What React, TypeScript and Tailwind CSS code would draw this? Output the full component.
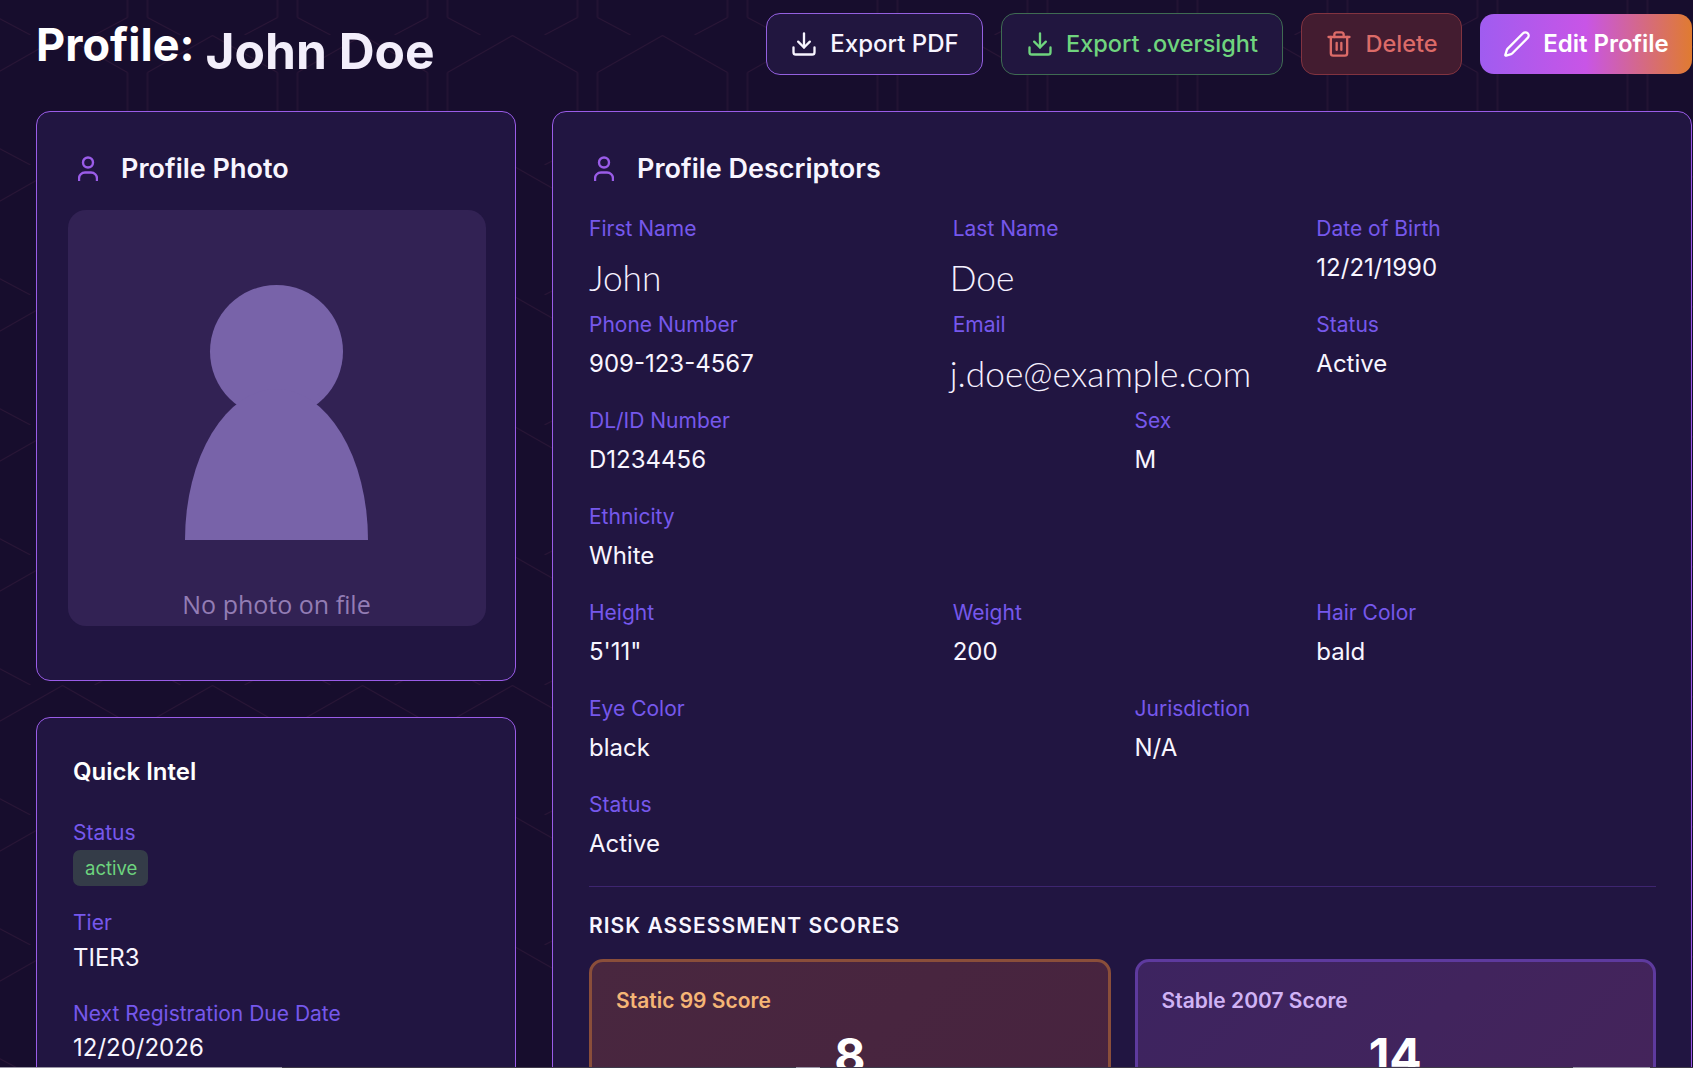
import { Download, Pen, Trash2 } from 'lucide-react';

const inter = '[font-family:Inter,sans-serif]';

function HexBackground() {
  return (
    <svg className="absolute inset-0 h-full w-full" aria-hidden="true">
      <defs>
        <pattern id="hex" x="-12.5" y="-95" width="150" height="130" patternUnits="userSpaceOnUse">
          <path d="M75 0.5 L10 37.5 V112.5 L43 130 M75 0.5 L140 37.5 V112.5 L107 130" fill="none" stroke="#2d1738" strokeWidth="1" />
        </pattern>
      </defs>
      <rect width="100%" height="100%" fill="url(#hex)" />
    </svg>
  );
}

function PersonIcon() {
  return (
    <svg viewBox="0 0 20 26" className="h-[26px] w-[20px] shrink-0" fill="none" stroke="#9a5ce8" strokeWidth="2.4" aria-hidden="true">
      <circle cx="10" cy="6.5" r="5" />
      <path d="M1 25v-2.5a6 6 0 0 1 6-6h6a6 6 0 0 1 6 6V25" />
    </svg>
  );
}

function Field({ label, value, big, shift }: { label: string; value: string; big?: boolean; shift?: boolean }) {
  return (
    <div>
      <div className="text-[21px] leading-[30px] text-[#7658ec]">{label}</div>
      {big ? (
        <div className={`mt-[18px] h-[22px] text-[35.3px] leading-[32px] font-light whitespace-nowrap text-[#f5f0ff] [font-family:Lato,sans-serif] ${shift ? '-ml-[3px]' : ''}`}>{value}</div>
      ) : (
        <div className="mt-[8px] text-[24px] leading-[32px] text-[#f8f5ff]">{value}</div>
      )}
    </div>
  );
}

function ScoreCard({ label, value, className, labelClass }: { label: string; value: string; className: string; labelClass: string }) {
  return (
    <div className={`h-[200px] rounded-[14px] border-[3px] px-[24px] pt-[24px] ${className}`}>
      <div className={`text-[21px] leading-[30px] font-semibold ${labelClass}`}>{label}</div>
      <div className="mt-[12px] text-center text-[48px] leading-[56px] font-bold text-white">{value}</div>
    </div>
  );
}

export default function App() {
  return (
    <div className={`relative h-[1068px] w-[1693px] overflow-hidden bg-[#170d2d] ${inter}`}>
      <HexBackground />
      <div className="relative w-[1692px] pl-[36px] pt-[13px]">
        {/* 상단 */}
        <div className="flex h-[62px] items-start justify-between">
          <h1 className="flex items-baseline gap-[11px] font-bold text-white">
            <span className="text-[45px] leading-[60px]">Profile:</span>
            <span className="relative top-[8px] text-[49.7px] leading-[60px] font-bold text-[#f3eefb]">John Doe</span>
          </h1>
          <div className="flex gap-[18px]">
            <button className="flex h-[62px] w-[217px] items-center justify-center gap-[12px] rounded-[14px] border border-[#9460e0] bg-[#21163f] text-[24px] font-medium text-[#f8f5ff]">
              <Download size={28} />
              Export PDF
            </button>
            <button className="flex h-[62px] w-[282px] items-center justify-center gap-[12px] rounded-[14px] border border-[#3f6b52] bg-[#21163f] text-[23.5px] font-medium text-[#6fd47e]">
              <Download size={28} />
              Export .oversight
            </button>
            <button className="flex h-[62px] w-[161px] items-center justify-center gap-[12px] rounded-[14px] border border-[#823340] bg-[#431c30] text-[23.5px] font-medium text-[#dc6b68]">
              <Trash2 size={28} />
              Delete
            </button>
            <button className="mt-px flex h-[60px] w-[212px] items-center justify-center gap-[12px] rounded-[14px] bg-[linear-gradient(90deg,#a05cf0_0%,#c855e6_50%,#e07b30_100%)] text-[24px] font-semibold text-white">
              <Pen size={28} />
              Edit Profile
            </button>
          </div>
        </div>

        <div className="mt-[36px] grid grid-cols-[480px_1fr] items-start gap-[36px]">
          <div className="flex flex-col gap-[36px]">
            {/* 사진 */}
            <section className="h-[570px] rounded-[14px] border border-[#9a5ce8] bg-[#211541] pl-[31px] pr-[29px] pt-[39px]">
              <div className="flex items-center gap-[23px] pl-[10px]">
                <PersonIcon />
                <h2 className="text-[27px] leading-[36px] font-semibold text-[#f8f5ff]">Profile Photo</h2>
              </div>
              <div className="relative mt-[23px] h-[416px] rounded-[18px] bg-[#322254]">
                <svg viewBox="0 0 418 416" className="absolute inset-0 h-full w-full" aria-hidden="true">
                  <circle cx="208.5" cy="141.5" r="66.5" fill="#7863a9" />
                  <path d="M117 330 A91.5 151 0 0 1 300 330 Z" fill="#7863a9" />
                  <text x="208.5" y="404" textAnchor="middle" fontSize="25" fill="#937db4" fontFamily="Open Sans, sans-serif">No photo on file</text>
                </svg>
              </div>
            </section>

            {/* 요약 */}
            <section className="h-[400px] rounded-[14px] border border-[#9a5ce8] bg-[#211541] px-[36px] pt-[38px]">
              <h3 className="text-[24px] leading-[32px] font-semibold text-white">Quick Intel</h3>
              <div className="mt-[30px] text-[21px] leading-[30px] text-[#7658ec]">Status</div>
              <span className="mt-[2px] inline-block rounded-[7px] bg-[#343c48] pl-[12px] pr-[11px] text-[18.5px] leading-[36px] text-[#6dd47e]">active</span>
              <div className="mt-[22px] text-[21px] leading-[30px] text-[#7658ec]">Tier</div>
              <div className="mt-[4px] text-[24px] leading-[32px] text-[#f8f5ff]">TIER3</div>
              <div className="mt-[25px] text-[21px] leading-[30px] text-[#7658ec]">Next Registration Due Date</div>
              <div className="mt-[3px] text-[24px] leading-[32px] text-[#f8f5ff]">12/20/2026</div>
            </section>
          </div>

          {/* 상세 */}
          <section className="rounded-[14px] border border-[#9a5ce8] bg-[#211541] pl-[36px] pr-[35px] pt-[39px]">
            <div className="flex items-center gap-[23px] pl-[5px]">
              <PersonIcon />
              <h2 className="text-[27px] leading-[36px] font-semibold text-[#f8f5ff]">Profile Descriptors</h2>
            </div>
            <div className="mt-[27px] grid grid-cols-3 gap-x-[24px] gap-y-[26px]">
              <Field label="First Name" value="John" big />
              <Field label="Last Name" value="Doe" big shift />
              <Field label="Date of Birth" value="12/21/1990" />
              <Field label="Phone Number" value="909-123-4567" />
              <Field label="Email" value="j.doe@example.com" big shift />
              <Field label="Status" value="Active" />
            </div>
            <div className="mt-[26px] grid grid-cols-2 gap-x-[24px] gap-y-[26px]">
              <Field label="DL/ID Number" value="D1234456" />
              <Field label="Sex" value="M" />
              <Field label="Ethnicity" value="White" />
            </div>
            <div className="mt-[26px] grid grid-cols-3 gap-x-[24px]">
              <Field label="Height" value={'5\'11"'} />
              <Field label="Weight" value="200" />
              <Field label="Hair Color" value="bald" />
            </div>
            <div className="mt-[26px] grid grid-cols-2 gap-x-[24px] gap-y-[26px]">
              <Field label="Eye Color" value="black" />
              <Field label="Jurisdiction" value="N/A" />
              <Field label="Status" value="Active" />
            </div>
            <div className="mt-[26px] border-t border-[#3e2570] pt-[25px]">
              <h3 className="text-[21px] leading-[28px] font-semibold tracking-[0.05em] text-[#f8f5ff]">RISK ASSESSMENT SCORES</h3>
              <div className="mt-[19px] grid grid-cols-2 gap-[24px]">
                <ScoreCard label="Static 99 Score" value="8" className="border-[#8a4e3a] bg-[linear-gradient(135deg,#49273f,#47233f)]" labelClass="text-[#f5b576]" />
                <ScoreCard label="Stable 2007 Score" value="14" className="border-[#5e3a9e] bg-[linear-gradient(135deg,#3d2460,#45245a)]" labelClass="text-[#d0b3f5]" />
              </div>
            </div>
          </section>
        </div>
      </div>
      <div className="absolute inset-x-0 bottom-0 flex h-px bg-[#3f3a4a]">
        <div className="h-px w-[282px] bg-[#9a96a6]" />
        <div className="ml-[514px] h-px w-[24px] bg-[#9a96a6]" />
        <div className="ml-[753px] h-px w-[77px] bg-[#9a96a6]" />
      </div>
    </div>
  );
}
